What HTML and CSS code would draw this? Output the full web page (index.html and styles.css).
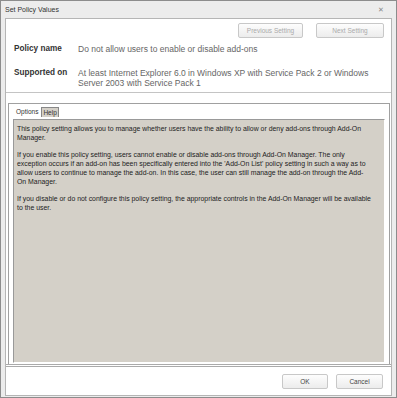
FILE: index.html
```html
<!DOCTYPE html>
<html>
<head>
    <title>Set Policy Values</title>
    <link rel="stylesheet" href="styles.css">
</head>
<body>
    <div class="window">
        <div class="titlebar">
            <span class="title">Set Policy Values</span>
            <span class="close">&#x2715;</span>
        </div>
        <div class="panel">
            <div class="nav">
                <button class="btn nav-btn prev" disabled>Previous Setting</button>
                <button class="btn nav-btn next" disabled>Next Setting</button>
            </div>
            <div class="info">
                <div class="label">Policy name</div>
                <div class="value">Do not allow users to enable or disable add-ons</div>
                <div class="label">Supported on</div>
                <div class="value">At least Internet Explorer 6.0 in Windows XP with Service Pack 2 or Windows Server 2003 with Service Pack 1</div>
            </div>
            <div class="tabs-area">
                <div class="tabbox">
                    <div class="tabs">
                        <span class="tab">Options</span>
                        <span class="tab active">Help</span>
                    </div>
                    <div class="help">
                        <p>This policy setting allows you to manage whether users have the ability to allow or deny add-ons through Add-On Manager.</p>
                        <p>If you enable this policy setting, users cannot enable or disable add-ons through Add-On Manager. The only exception occurs if an add-on has been specifically entered into the 'Add-On List' policy setting in such a way as to allow users to continue to manage the add-on. In this case, the user can still manage the add-on through the Add-On Manager.</p>
                        <p>If you disable or do not configure this policy setting, the appropriate controls in the Add-On Manager will be available to the user.</p>
                    </div>
                </div>
            </div>
            <div class="footer">
                <button class="btn ok">OK</button>
                <button class="btn cancel">Cancel</button>
            </div>
        </div>
    </div>
</body>
</html>
```

FILE: styles.css
```css
body {
    margin: 0;
    font-family: "Liberation Sans", Arial, sans-serif;
    background-color: #fff;
}
.window {
    width: 397px;
    height: 398px;
    box-sizing: border-box;
    border: 1px solid #8c8c8c;
    background-color: #ececec;
    padding: 0 4px 1px 4px;
    display: flex;
    flex-direction: column;
}
.titlebar {
    height: 17px;
    display: flex;
    align-items: center;
    justify-content: space-between;
    padding: 0 8px 0 0;
}
.title {
    font-size: 7px;
    color: #333;
}
.close {
    font-size: 7px;
    color: #888;
}
.panel {
    flex: 1;
    background-color: #fff;
    border: 1px solid #b5b5b5;
    display: flex;
    flex-direction: column;
}
.btn {
    font-family: "Liberation Sans", Arial, sans-serif;
    font-size: 6.5px;
    color: #444;
    background: linear-gradient(#fdfdfd, #ececec);
    border: 1px solid #c8c8c8;
    border-radius: 2px;
    padding: 0;
    height: 15px;
}
.nav {
    display: flex;
    justify-content: flex-end;
    gap: 13px;
    padding: 4px 7px 0 0;
}
.nav-btn {
    color: #aaa;
}
.prev {
    width: 65px;
}
.next {
    width: 68px;
}
.info {
    display: grid;
    grid-template-columns: 64px 1fr;
    align-content: start;
    row-gap: 14px;
    padding: 6px 10px 0 8px;
    height: 48px;
    border-bottom: 1px solid #c4c4c4;
}
.label {
    font-size: 8.2px;
    font-weight: bold;
    color: #333;
    line-height: 10px;
}
.value {
    font-size: 8.5px;
    color: #666;
    line-height: 10px;
}
.tabs-area {
    flex: 1;
    padding: 10px 1px 0 2px;
    display: flex;
    border-bottom: 3px double #aaa;
}
.tabbox {
    flex: 1;
    border: 1px solid #a0a0a0;
    border-bottom: none;
    display: flex;
    flex-direction: column;
    padding: 0 4px 0 4px;
}
.tabs {
    display: flex;
    gap: 3px;
    padding: 3px 0 2px 3px;
    font-size: 6.5px;
    color: #333;
    line-height: 10px;
}
.tab.active {
    background-color: #d4d0c8;
    border: 1px solid #888;
    border-bottom: none;
    padding: 0 1px;
    line-height: 9px;
}
.help {
    flex: 1;
    background-color: #d4d0c8;
    border: 1px solid #999;
    border-right-color: #fff;
    border-bottom-color: #fff;
    margin-bottom: 1px;
    padding: 5px 12px 0 3px;
    font-size: 6.9px;
    line-height: 8.8px;
    color: #222;
}
.help p {
    margin: 0 0 8.8px 0;
}
.footer {
    height: 28px;
    display: flex;
    justify-content: flex-end;
    align-items: center;
    gap: 8px;
    padding: 0 8px 0 0;
}
.ok {
    width: 46px;
}
.cancel {
    width: 47px;
}
```
